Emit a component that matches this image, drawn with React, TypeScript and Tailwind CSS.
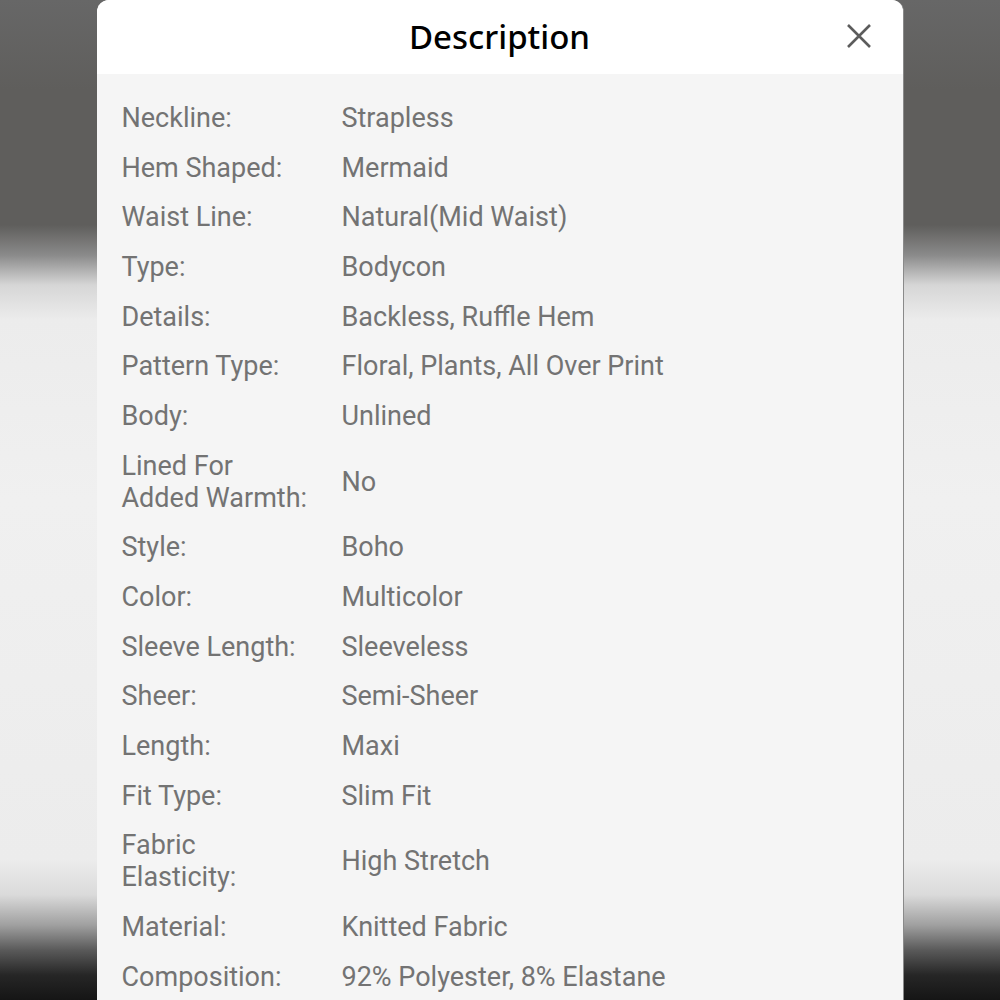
import React from "react";

const rows: { label: React.ReactNode; value: string }[] = [
  { label: "Neckline:", value: "Strapless" },
  { label: "Hem Shaped:", value: "Mermaid" },
  { label: "Waist Line:", value: "Natural(Mid Waist)" },
  { label: "Type:", value: "Bodycon" },
  { label: "Details:", value: "Backless, Ruffle Hem" },
  { label: "Pattern Type:", value: "Floral, Plants, All Over Print" },
  { label: "Body:", value: "Unlined" },
  { label: (<>Lined For<br />Added Warmth:</>), value: "No" },
  { label: "Style:", value: "Boho" },
  { label: "Color:", value: "Multicolor" },
  { label: "Sleeve Length:", value: "Sleeveless" },
  { label: "Sheer:", value: "Semi-Sheer" },
  { label: "Length:", value: "Maxi" },
  { label: "Fit Type:", value: "Slim Fit" },
  { label: (<>Fabric<br />Elasticity:</>), value: "High Stretch" },
  { label: "Material:", value: "Knitted Fabric" },
  { label: "Composition:", value: "92% Polyester, 8% Elastane" },
];

export default function App() {
  return (
    <div className="h-[1000px] w-[1000px] overflow-hidden bg-[linear-gradient(to_bottom,#676767_0px,#5f5e5c_90px,#5f5e5c_225px,#8a8a8a_255px,#d6d6d6_285px,#ececec_320px,#f0f0f0_500px,#ececec_860px,#dadada_895px,#a0a0a0_925px,#5a5a5a_950px,#262626_975px,#151515_1000px)]">
      <div className="mx-auto flex h-[1000px] w-[807px] flex-col overflow-hidden rounded-t-[12px] border-r border-[#8a8a8a] bg-[#f5f5f5]">
        <div className="relative flex h-[74px] shrink-0 items-center justify-center bg-white">
          <span className="font-['Noto_Sans',sans-serif] text-[33px] font-medium text-black">
            Description
          </span>
          <svg
            className="absolute left-[748px] top-[22px]"
            width="28"
            height="28"
            viewBox="0 0 28 28"
            fill="none"
            stroke="#5c5c5c"
            strokeWidth="2.6"
            strokeLinecap="butt"
          >
            <path d="M3 3L25 25M25 3L3 25" />
          </svg>
        </div>
        <div className="flex flex-col pl-[25px] pt-[19px] font-['Roboto',sans-serif] text-[27px] leading-[32px] text-[#737373]">
          {rows.map((r, i) => (
            <div key={i} className="flex items-center py-[8.85px]">
              <div className="w-[220px] shrink-0">{r.label}</div>
              <div>{r.value}</div>
            </div>
          ))}
        </div>
      </div>
    </div>
  );
}
